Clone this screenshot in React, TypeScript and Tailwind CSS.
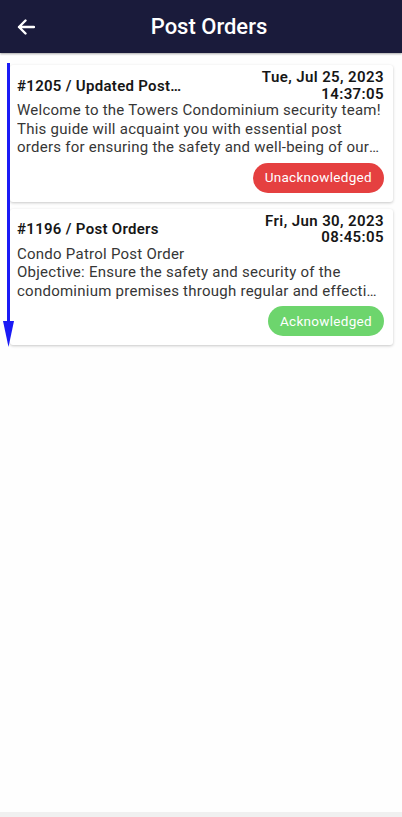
import React from "react";

const font = { fontFamily: 'Roboto, "Noto Sans", Arial, sans-serif' };

function Card(props: {
  title: string;
  date: string;
  time: string;
  lines: string[];
  ack: boolean;
}) {
  return (
    <div className="mx-[9px] ml-[10px] rounded-[3px] bg-white pl-[7px] pr-[9px] pt-[4px] pb-[9px] shadow-[0_1px_3px_rgba(0,0,0,0.22)]">
      <div className="flex items-center justify-between">
        <div className="text-[15px] font-semibold tracking-[0.3px] text-[#161616] leading-[18px]">{props.title}</div>
        <div className="text-right text-[15px] font-semibold tracking-[0.4px] text-[#161616] leading-[16.5px]">
          <div>{props.date}</div>
          <div>{props.time}</div>
        </div>
      </div>
      <div className="mt-[-1px] text-[15px] leading-[18.5px] tracking-[0.25px] text-[#363636] line-clamp-3">
        {props.lines.map((l, i) => (
          <React.Fragment key={i}>
            {i > 0 && <br />}
            {l}
          </React.Fragment>
        ))}
      </div>
      <div className="mt-[6px] flex justify-end">
        <div
          className={
            "flex h-[30px] items-center rounded-full px-[12px] text-[13.5px] tracking-[0.3px] text-white " +
            (props.ack ? "bg-[#6dd56d]" : "bg-[#e54040]")
          }
        >
          {props.ack ? "Acknowledged" : "Unacknowledged"}
        </div>
      </div>
    </div>
  );
}

export default function App() {
  return (
    <div className="relative flex h-[817px] w-[402px] flex-col bg-[#fefefe]" style={font}>
      <div className="relative z-10 flex h-[53px] items-center bg-[#1a1b3b] shadow-[0_1px_2px_rgba(0,0,0,0.35)]">
        <div className="ml-[16px] flex h-[20px] w-[20px] items-center justify-center">
          <svg width="18" height="16" viewBox="0 0 18 16" fill="none">
            <path d="M17 8H2M8.5 1.5L2 8l6.5 6.5" stroke="white" strokeWidth="2.4" strokeLinecap="round" strokeLinejoin="round" />
          </svg>
        </div>
        <div className="flex-1 pr-[20px] text-center text-[22px] font-medium text-white">Post Orders</div>
      </div>
      <div className="flex flex-1 flex-col gap-[7px] pt-[12px]">
        <Card
          title="#1205 / Updated Post…"
          date="Tue, Jul 25, 2023"
          time="14:37:05"
          lines={[
            "Welcome to the Towers Condominium security team! This guide will acquaint you with essential post orders for ensuring the safety and well-being of our residents and property.",
          ]}
          ack={false}
        />
        <Card
          title="#1196 / Post Orders"
          date="Fri, Jun 30, 2023"
          time="08:45:05"
          lines={[
            "Condo Patrol Post Order",
            "Objective: Ensure the safety and security of the condominium premises through regular and effective patrols.",
          ]}
          ack={true}
        />
      </div>
      <div className="h-[5px] bg-[#f0f0f0]" />
      <svg className="absolute left-[2px] top-[63px]" width="14" height="285" viewBox="0 0 14 285">
        <rect x="5" y="0" width="3" height="262" fill="#1a1af5" />
        <polygon points="1,258 12,258 6.5,284" fill="#1a1af5" />
      </svg>
    </div>
  );
}
